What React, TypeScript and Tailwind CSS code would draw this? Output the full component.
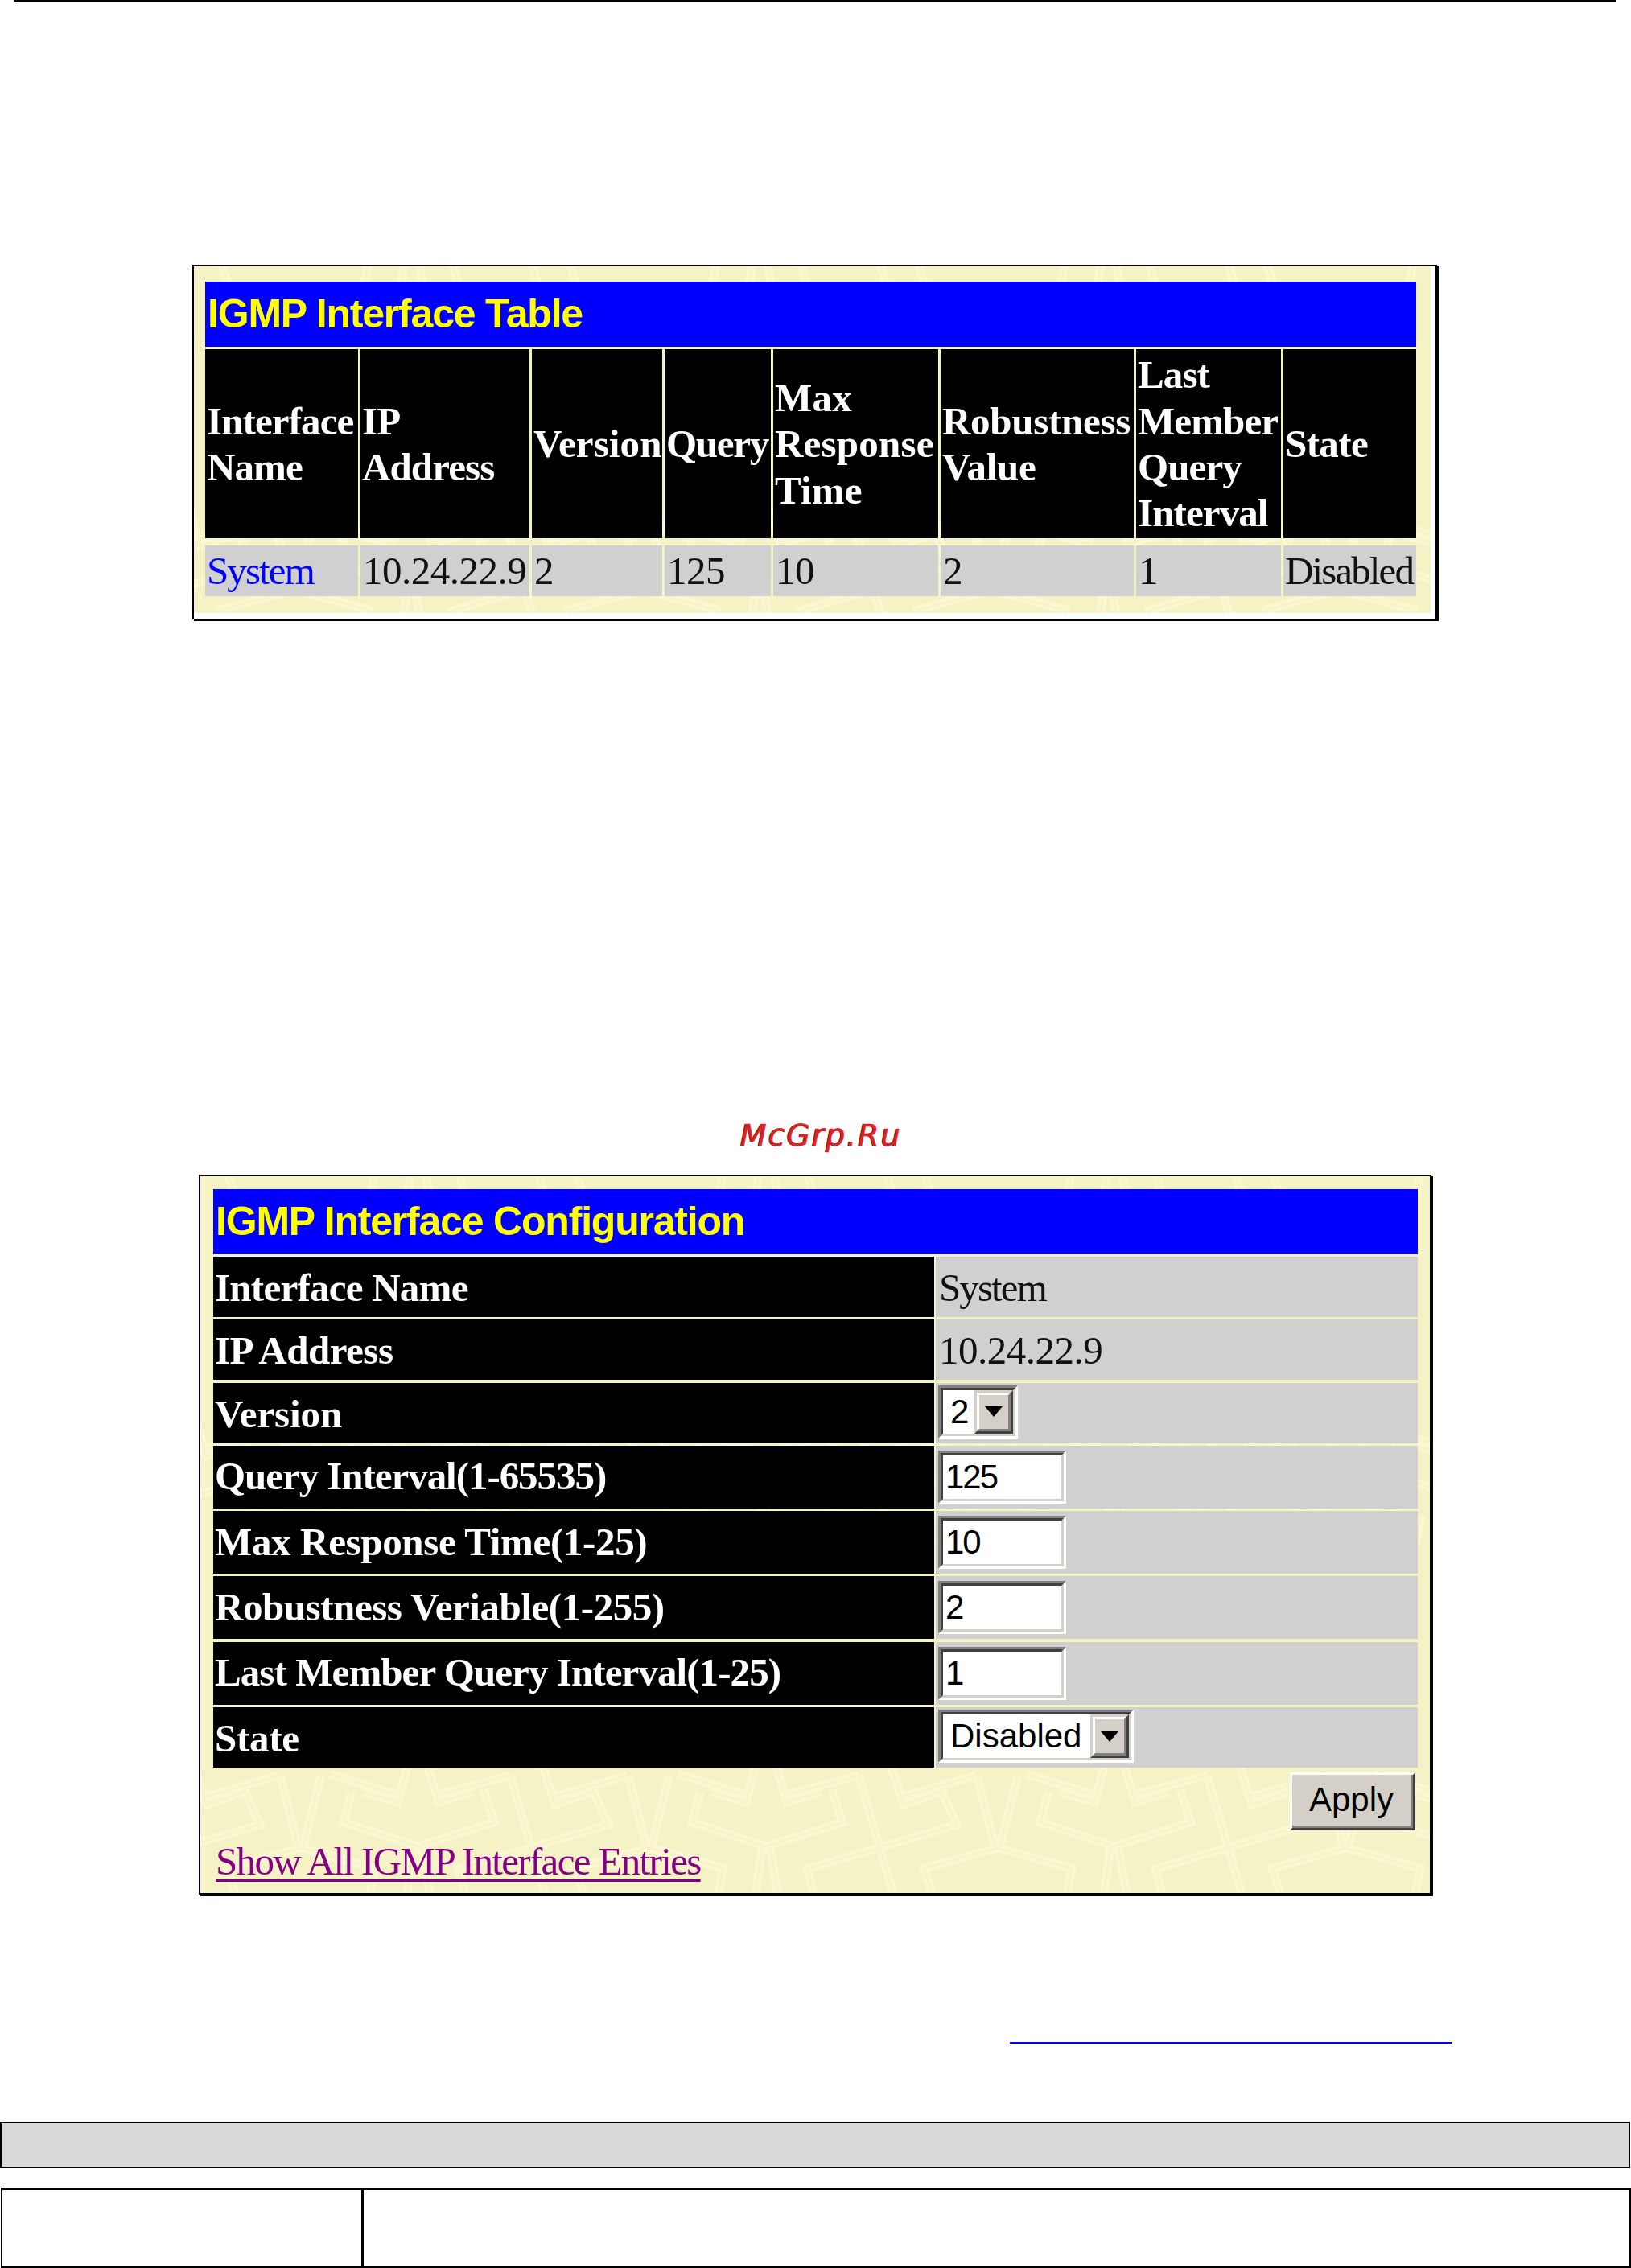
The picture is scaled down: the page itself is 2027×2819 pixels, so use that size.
import type { ReactNode } from 'react';

const columns = [
  { title: 'Interface Name', value: 'System', tracking: 'tracking-[-0.9px]', link: true },
  { title: 'IP Address', value: '10.24.22.9', tracking: 'tracking-[-0.9px]' },
  { title: 'Version', value: '2', tracking: 'tracking-[0.1px]' },
  { title: 'Query', value: '125', tracking: 'tracking-[-1.3px]' },
  { title: 'Max Response Time', value: '10', tracking: 'tracking-[0.2px]' },
  { title: 'Robustness Value', value: '2', tracking: 'tracking-[-0.3px]' },
  { title: 'Last Member Query Interval', value: '1', tracking: 'tracking-[-0.9px]' },
  { title: 'State', value: 'Disabled', tracking: 'tracking-[-0.6px]' },
];

const serif = "font-['Liberation_Serif',serif] text-[49px]";
const sans = "font-['Liberation_Sans',sans-serif]";
const gridColumns = 'grid grid-cols-[190px_210px_162px_132px_205px_240px_180px_165px] gap-x-[3px]';

const tileLines = [
  'M150 312L127 402M99 312L122 402',
  'M43 458L33 427L125 402L217 427L211 458',
  'M188 332L178 370L270 400L365 370L352 330',
  'M265 402L257 458M275 402L285 458',
  'M385 312L428 458',
  'M487 328L507 373L321 428L329 458',
  'M426 302L441 348L487 332',
  'M385 312L298 335M530 312L441 338',
  'M201 332L245 345L257 302M339 332L296 345L283 302',
  'M160 310L242 335',
].join('');

const tileOffsets = ['translate(0 0)', 'translate(-433 0)', 'translate(0 -433)', 'translate(-433 -433)'];

// Tiled star lattice used as the page wallpaper
function Wallpaper({ id }: { id: string }) {
  return (
    <svg className="absolute inset-0 w-full h-full" aria-hidden="true">
      <defs>
        <pattern id={id} width="433" height="433" patternUnits="userSpaceOnUse">
          <rect width="433" height="433" fill="#f5f2c5" />
          {tileOffsets.map((offset) => (
            <g key={offset} transform={offset} fill="none">
              <path d={tileLines} stroke="#faf7d1" strokeWidth="11" />
              <path d={tileLines} stroke="#f7f4ca" strokeWidth="3" />
            </g>
          ))}
        </pattern>
      </defs>
      <rect width="100%" height="100%" fill={`url(#${id})`} />
    </svg>
  );
}

function TitleBar({ children }: { children: ReactNode }) {
  return (
    <h2 className={`${sans} h-[81px] bg-[#0000ff] pl-[3px] text-[50px] leading-[81px] font-bold tracking-[-1.2px] text-[#ffff00]`}>
      {children}
    </h2>
  );
}

function isNumeric(text: string) {
  return /^[\d.]+$/.test(text);
}

function InterfaceTable() {
  return (
    <section className="ml-[239px] w-[1547px] h-[441px] border-2 border-b border-black bg-white shadow-[2px_2px_0_#000]">
      <div className="relative w-[1537px] h-[431px]">
        <Wallpaper id="lattice-table" />
        <div className="relative pl-[14px] pr-[18px] pt-[19px]">
          <TitleBar>IGMP Interface Table</TitleBar>
          <div className={`${gridColumns} mt-[3px] h-[235px]`}>
            {columns.map((col) => (
              <div
                key={col.title}
                className={`${serif} ${col.tracking} flex items-center bg-black pt-px pl-[2px] leading-[57.3px] font-bold text-white`}
              >
                {/* Words break one per line in the narrow header cells */}
                <span className="w-min">{col.title}</span>
              </div>
            ))}
          </div>
          <div className={`${gridColumns} mt-[9px] h-[63px]`}>
            {columns.map((col) => (
              <div
                key={col.title}
                className={`${serif} flex items-center whitespace-nowrap bg-[#d0d0d0] leading-[57px] ${
                  isNumeric(col.value) ? 'pl-[3px] tracking-[-0.5px]' : 'pl-[2px] tracking-[-1.9px]'
                } ${col.link ? 'text-[#0000ff]' : 'text-[#111]'}`}
              >
                {col.value}
              </div>
            ))}
          </div>
        </div>
      </div>
    </section>
  );
}

const sunken =
  'border-[3px] border-t-[#808080] border-l-[#808080] border-r-white border-b-white';
const sunkenInner =
  'border-[3px] border-t-[#404040] border-l-[#404040] border-r-[#d4d0c8] border-b-[#d4d0c8]';

function TextField({ value }: { value: string }) {
  return (
    <div className={`${sunken} h-[66px] w-[159px]`}>
      <div className={`${sunkenInner} h-full bg-white`}>
        <input
          readOnly
          value={value}
          className={`${sans} block h-full w-full bg-white pl-[3px] text-[42px] leading-[54px] tracking-[-2px] text-black outline-none`}
        />
      </div>
    </div>
  );
}

function SelectBox({ value, className }: { value: string; className: string }) {
  return (
    <div className={`${sunken} h-[66px] ${className}`}>
      <div className={`${sunkenInner} flex h-full bg-white`}>
        <span className={`${sans} flex-1 pl-[9px] text-[42px] leading-[54px] text-black`}>{value}</span>
        <span className="h-[54px] w-[48px] border-[3px] border-t-[#d4d0c8] border-l-[#d4d0c8] border-r-[#404040] border-b-[#404040]">
          <span className="flex h-full items-center justify-center border-[3px] border-t-white border-l-white border-r-[#808080] border-b-[#808080] bg-[#d4d0c8]">
            <svg width="22" height="13" viewBox="0 0 22 13">
              <path d="M0 0H22L11 13Z" fill="#000" />
            </svg>
          </span>
        </span>
      </div>
    </div>
  );
}

interface RowProps {
  label: string;
  tracking: string;
  tall?: boolean;
  children: ReactNode;
}

function ConfigRow({ label, tracking, tall, children }: RowProps) {
  return (
    <div className={`grid grid-rows-1 grid-cols-[896px_599px] gap-x-[2px] ${tall ? 'h-[78px]' : 'h-[75px]'}`}>
      <div className={`${serif} ${tracking} flex items-center bg-black pl-[2px] leading-[57px] font-bold text-white`}>
        <span className={tall ? 'pb-0.5' : 'pt-0.5'}>{label}</span>
      </div>
      <div className={`${serif} bg-[#d0d0d0] pl-[3px] text-[#111]`}>{children}</div>
    </div>
  );
}

function ConfigPanel() {
  return (
    <section className="relative ml-[247px] w-[1532px] h-[895px] border-2 border-black shadow-[2px_2px_0_#000]">
      <Wallpaper id="lattice-config" />
      <div className="relative pl-[16px] pr-[15px] pt-[16px]">
        <TitleBar>IGMP Interface Configuration</TitleBar>
        <div className="mt-[3px] flex flex-col gap-[3.3px]">
          <ConfigRow label="Interface Name" tracking="tracking-[-0.75px]">
            <p className="pl-px leading-[77px] tracking-[-1.9px]">System</p>
          </ConfigRow>
          <ConfigRow label="IP Address" tracking="tracking-[-0.5px]">
            <p className="pl-px leading-[77px] tracking-[-0.5px]">10.24.22.9</p>
          </ConfigRow>
          <ConfigRow label="Version" tracking="tracking-[-0.1px]">
            <div className="pt-[3px]">
              <SelectBox value="2" className="w-[99px]" />
            </div>
          </ConfigRow>
          <ConfigRow label="Query Interval(1-65535)" tracking="tracking-[-1.05px]" tall>
            <div className="pt-[6px]">
              <TextField value="125" />
            </div>
          </ConfigRow>
          <ConfigRow label="Max Response Time(1-25)" tracking="tracking-[-0.35px]" tall>
            <div className="pt-[6px]">
              <TextField value="10" />
            </div>
          </ConfigRow>
          <ConfigRow label="Robustness Veriable(1-255)" tracking="tracking-[-0.45px]" tall>
            <div className="pt-[6px]">
              <TextField value="2" />
            </div>
          </ConfigRow>
          <ConfigRow label="Last Member Query Interval(1-25)" tracking="tracking-[-0.92px]" tall>
            <div className="pt-[6px]">
              <TextField value="1" />
            </div>
          </ConfigRow>
          <ConfigRow label="State" tracking="tracking-[-0.3px]">
            <div className="pt-[3px]">
              <SelectBox value="Disabled" className="w-[243px]" />
            </div>
          </ConfigRow>
        </div>
        <div className="mt-[6px] flex justify-end pr-[3px]">
          <button className="h-[72px] w-[156px] border-[3px] border-t-white border-l-white border-r-[#404040] border-b-[#404040]">
            <span
              className={`${sans} block h-full border-r-[3px] border-b-[3px] border-[#808080] bg-[#d4d0c8] text-[42px] leading-[61px] text-black`}
            >
              Apply
            </span>
          </button>
        </div>
        <a
          className={`${serif} mt-[10px] ml-[3px] block w-[605px] whitespace-nowrap leading-[57px] tracking-[-1.66px] text-[#860086] underline decoration-[3px] underline-offset-[6px]`}
        >
          Show All IGMP Interface Entries
        </a>
      </div>
    </section>
  );
}

export default function App() {
  return (
    <main className="w-[2027px] h-[2819px] overflow-hidden bg-white">
      <div className="ml-[18px] h-[2px] w-[1990px] bg-black mb-[327px]"></div>

      <InterfaceTable />

      <p className="mt-[610px] mb-[23px] ml-[920px] h-[57px] font-['DejaVu_Sans',sans-serif] text-[38px] leading-[62px] italic tracking-[1.9px] text-[#dd2222] [-webkit-text-stroke:0.5px_#dd2222] [text-shadow:-1px_0_0_#5a1010]">
        McGrp.Ru
      </p>

      <ConfigPanel />

      <div className="mt-[183px] ml-[1255px] h-[2px] w-[549px] bg-[#0000ff]"></div>

      {/* Ruled boxes at the foot of the page */}
      <div className="mt-[97px] h-[58px] w-[2026px] border-2 border-black bg-[#d9d9d9]"></div>
      <div className="mt-[24px] ml-px flex h-[100px] w-[2026px] border-y-[3px] border-r-[3px] border-l-2 border-black">
        <div className="w-[449px] border-r-[3px] border-black"></div>
      </div>
    </main>
  );
}
